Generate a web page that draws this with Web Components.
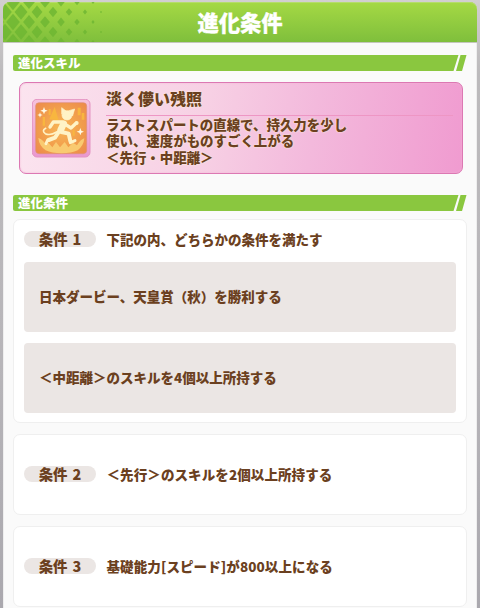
<!DOCTYPE html>
<html lang="ja">
<head>
<meta charset="UTF-8">
<title>進化条件</title>
<style>
  body {
    margin: 0;
    height: 608px;
    overflow: hidden;
    background: linear-gradient(#d2cfd0, #bcbabc 12%, #b7b5b9 60%, #aaa8ae);
    font-family: "Noto Sans CJK JP", sans-serif;
    font-weight: 900;
    color: #6b4020;
  }
</style>
</head>
<body>
  <evolution-panel>
    <span slot="title">進化条件</span>
    <section-bar>進化スキル</section-bar>
    <skill-card>
      <skill-icon slot="icon"></skill-icon>
      <span slot="name">淡く儚い残照</span>
      ラストスパートの直線で、持久力を少し<br>使い、速度がものすごく上がる<br>＜先行・中距離＞
    </skill-card>
    <section-bar>進化条件</section-bar>
    <condition-card>
      <span slot="label">条件 1</span>
      <span slot="text">下記の内、どちらかの条件を満たす</span>
      <condition-option>日本ダービー、天皇賞（秋）を勝利する</condition-option>
      <condition-option>＜中距離＞のスキルを4個以上所持する</condition-option>
    </condition-card>
    <condition-card single>
      <span slot="label">条件 2</span>
      <span slot="text">＜先行＞のスキルを2個以上所持する</span>
    </condition-card>
    <condition-card single>
      <span slot="label">条件 3</span>
      <span slot="text">基礎能力[スピード]が800以上になる</span>
    </condition-card>
  </evolution-panel>

<script>
// Panel principal con cabecera verde
class EvolutionPanel extends HTMLElement {
  constructor() {
    super();
    const shadow = this.attachShadow({ mode: 'open' });

    shadow.innerHTML = `
      <style>
        :host {
          display: block;
          box-sizing: border-box;
          margin: 0 3px;
          padding-top: 2px;
        }

        header {
          display: grid;
          height: 40px;
          border-bottom: 1px solid #c4c6bd;
          border-radius: 7px 7px 0 0;
          background: linear-gradient(#a5d944, #7fbf3c);
          box-shadow: inset 0 1px #b5dd6a;
          overflow: hidden;
        }

        header > * {
          grid-area: 1 / 1;
        }

        h1 {
          margin: 0;
          text-align: center;
          color: #fff;
          font-size: 21.3px;
          font-weight: 900;
          line-height: 40px;
          -webkit-text-stroke: 0.3px #fff;
        }

        main {
          display: flex;
          flex-direction: column;
          min-height: 565px;
          padding: 12px 10px 0;
          box-sizing: border-box;
          background: #fafafa;
          border-left: 1px solid #eeeeee;
          border-right: 1px solid #eeeeee;
        }
      </style>

      <header>
        <svg width="110" height="40"><g fill="#6db532" fill-opacity="0.8"></g></svg>
        <h1><slot name="title"></slot></h1>
      </header>
      <main><slot></slot></main>
    `;

    this.drawPattern(shadow.querySelector('g'));
  }

  // Rombos que se hacen más pequeños hacia la derecha
  drawPattern(group) {
    let shapes = '';
    for (let row = 0; row < 5; row++) {
      for (let col = 0; col < 7; col++) {
        const x = (row % 2 ? 2 : -6) + col * 16;
        const y = row * 10;
        const w = Math.max(0, Math.min(6.8, 7.7 - x * 0.068));
        const h = w * 1.2;
        shapes += `<path d="M${x} ${y - h}l${w} ${h}l${-w} ${h}l${-w} ${-h}z"/>`;
      }
    }
    group.innerHTML = shapes;
  }
}

// Barra de sección con corte diagonal
class SectionBar extends HTMLElement {
  constructor() {
    super();
    const shadow = this.attachShadow({ mode: 'open' });

    shadow.innerHTML = `
      <style>
        :host {
          display: flex;
          width: 454px;
          height: 16px;
          margin-left: -1px;
          color: #fff;
          font-size: 12.5px;
          line-height: 16px;
        }

        .bar {
          width: 440.5px;
          padding-left: 5px;
          background: #8ac73f;
          border-radius: 2px 0 0 2px;
          clip-path: polygon(0 0, 100% 0, calc(100% - 5px) 100%, 0 100%);
        }

        .tail {
          width: 10.5px;
          margin-left: -2.5px;
          background: #8ac73f;
          clip-path: polygon(4.5px 0, 100% 0, 6px 100%, 0 100%);
        }
      </style>

      <div class="bar"><slot></slot></div>
      <div class="tail"></div>
    `;
  }
}

class SkillIcon extends HTMLElement {
  constructor() {
    super();
    const shadow = this.attachShadow({ mode: 'open' });

    shadow.innerHTML = `
      <style>
        :host {
          display: block;
          width: 59px;
          height: 59px;
        }

        svg {
          display: block;
        }
      </style>

      <svg width="59" height="59" viewBox="4 4 177 177">
        <defs>
          <linearGradient id="frame" x1="0" y1="0" x2="0" y2="1">
            <stop offset="0" stop-color="#f6c3dc"/>
            <stop offset="1" stop-color="#e998cf"/>
          </linearGradient>
          <radialGradient id="glow" cx=".5" cy=".5" r=".65">
            <stop offset="0" stop-color="#f8b658"/>
            <stop offset=".55" stop-color="#f2a04c"/>
            <stop offset="1" stop-color="#ed8d4b"/>
          </radialGradient>
        </defs>
        <rect x="5" y="5" width="173" height="173" rx="14" fill="url(#frame)" stroke="#e493c2" stroke-width="3"/>
        <rect x="15" y="15" width="153" height="153" rx="10" fill="url(#glow)" stroke="#de9079" stroke-width="2"/>

        <!-- destellos y llamas -->
        <g fill="#f8b63f">
          <path d="M56 65L72 28l12 40zM141 30h9v23h-9zM153 46h8v20h-8zM36 58h7v26h-7zM54 34h6v18h-6zM126 98h6v16h-6z"/>
        </g>
        <path fill="#f9ca70" d="M23 121q15 5 24 22l6-8 12 14 11-16 12 16 14-16 11 16 14-14 12 8q9-16 22-21-2 22-20 36-18 9-48 9t-48-9q-20-14-22-37z"/>

        <!-- figura corriendo -->
        <g fill="none" stroke="#fff3c6" stroke-linecap="round" stroke-linejoin="round">
          <path fill="#fff3c6" stroke-width="2" d="M93 48L93 30l12 9zM115 39l17-5-6 20z"/>
          <ellipse cx="109" cy="53" rx="15" ry="14" fill="#fff3c6" stroke-width="2"/>
          <path stroke-width="20" d="M99 78L90 97"/>
          <path stroke-width="10" d="M94 73L68 73 58 88M104 80l17 11 15-14"/>
          <path stroke-width="12" d="M92 103l22 5 5 22"/>
          <path stroke-width="12" d="M84 103L73 120 54 127"/>
          <path stroke-width="9" d="M119 135l14-6M51 127l-5 11"/>
          <path stroke-width="5" d="M78 103q-20 12-34 5-12-9 1-16"/>
          <circle cx="138" cy="76" r="4" fill="#fff3c6" stroke-width="4"/>
        </g>

        <g fill="#fffbe4">
          <path d="M40 28l3 8 8 3-8 3-3 8-3-8-8-3 8-3zM28 44l2 6 6 2-6 2-2 6-2-6-6-2 6-2zM149 91l3 8 8 3-8 3-3 8-3-8-8-3 8-3z"/>
        </g>
      </svg>
    `;
  }
}

// Tarjeta rosa con la habilidad
class SkillCard extends HTMLElement {
  constructor() {
    super();
    const shadow = this.attachShadow({ mode: 'open' });

    shadow.innerHTML = `
      <style>
        :host {
          display: grid;
          grid-template-columns: 59px 1fr;
          column-gap: 15px;
          align-items: center;
          box-sizing: border-box;
          width: 444px;
          height: 92px;
          margin: 11px 0 21px 5px;
          padding: 0 9px 0 12px;
          border: 1.5px solid #dc78b3;
          border-radius: 7px;
          background: linear-gradient(98deg, #fbe4ef, #f7d0e4 42%, #f3b9dc 66%, #f09bd0);
          box-shadow: inset 0 0 2px #f2b5d5;
        }

        .name {
          height: 31px;
          border-bottom: 1.5px solid #ee96c4;
          font-size: 16px;
          line-height: 28px;
        }

        .text {
          height: 57px;
          padding-top: 2px;
          box-sizing: border-box;
          font-family: "Liberation Sans", "Noto Sans CJK JP", sans-serif;
          font-size: 13.45px;
          line-height: 16.5px;
        }

        .name, .text {
          text-shadow: 0 0 1px #fff2dc, 0 0 2px #fff2dc;
          white-space: nowrap;
        }
      </style>

      <slot name="icon"></slot>
      <div>
        <div class="name"><slot name="name"></slot></div>
        <div class="text"><slot></slot></div>
      </div>
    `;
  }
}

class ConditionOption extends HTMLElement {
  constructor() {
    super();
    const shadow = this.attachShadow({ mode: 'open' });

    shadow.innerHTML = `
      <style>
        :host {
          display: flex;
          align-items: center;
          box-sizing: border-box;
          height: 70px;
          padding: 0 0 3px 15px;
          border-radius: 4px;
          background: #ebe6e4;
          font-size: 13.5px;
          white-space: nowrap;
        }
      </style>

      <slot></slot>
    `;
  }
}

// Tarjeta blanca con una condición y sus opciones
class ConditionCard extends HTMLElement {
  constructor() {
    super();
    const shadow = this.attachShadow({ mode: 'open' });

    shadow.innerHTML = `
      <style>
        :host {
          display: flex;
          flex-direction: column;
          gap: 11px;
          box-sizing: border-box;
          width: 454px;
          height: 204px;
          margin: 8px 0 0 -1px;
          padding: 10px 10px 0 10px;
          border: 1px solid #efefef;
          border-radius: 7px;
          background: #fff;
        }

        :host([single]) {
          height: 81px;
          margin-top: 11px;
          padding-top: 0;
          justify-content: center;
        }

        .row {
          display: flex;
          align-items: center;
          gap: 10.5px;
          height: 20px;
          margin-top: -1px;
          padding-bottom: 2px;
          font-size: 13.5px;
          white-space: nowrap;
        }

        :host([single]) .row {
          padding-bottom: 0;
          letter-spacing: 0.1px;
        }

        .label {
          width: 72px;
          height: 16px;
          border-radius: 8px;
          background: #ebe6e4;
          text-align: center;
          font-size: 14.4px;
          line-height: 16px;
          word-spacing: 1.5px;
        }
      </style>

      <div class="row">
        <div class="label"><slot name="label"></slot></div>
        <slot name="text"></slot>
      </div>
      <slot></slot>
    `;
  }
}

customElements.define('evolution-panel', EvolutionPanel);
customElements.define('section-bar', SectionBar);
customElements.define('skill-icon', SkillIcon);
customElements.define('skill-card', SkillCard);
customElements.define('condition-option', ConditionOption);
customElements.define('condition-card', ConditionCard);
</script>
</body>
</html>
